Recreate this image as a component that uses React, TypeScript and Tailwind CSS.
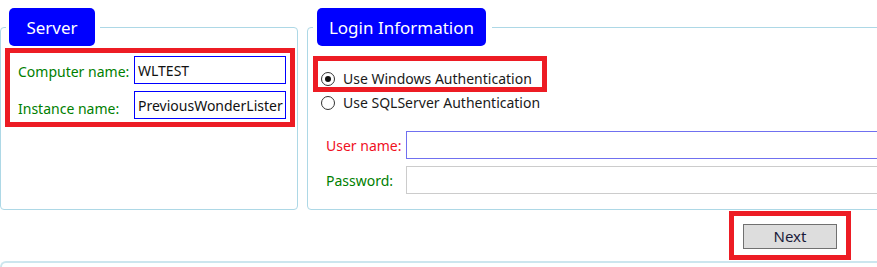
import React from 'react';

const FONT = "font-['Segoe_UI','Noto_Sans',sans-serif]";

function Tab({ label, width }: { label: string; width: string }) {
  return (
    <div className={`${width} h-[38px] flex items-center justify-center rounded-[5px] bg-[#0000ff] text-white text-[17px] leading-none`}>
      {label}
    </div>
  );
}

function Radio({ checked, label }: { checked?: boolean; label: string }) {
  return (
    <div className="flex items-center h-[14px] gap-[8px]">
      <div className="w-[14px] h-[14px] rounded-full border border-[#333] bg-white flex items-center justify-center">
        {checked && <div className="w-[6px] h-[6px] rounded-full bg-[#111]" />}
      </div>
      <span className="text-[14px] text-[#1a1a1a] leading-none">{label}</span>
    </div>
  );
}

export default function App() {
  return (
    <div className={`w-[877px] h-[267px] overflow-hidden bg-white ${FONT}`}>
      <div className="flex items-start">
        {/* Server group */}
        <fieldset className="shrink-0 min-w-0 mt-[8px] w-[298px] h-[202px] border border-[#add8e6] rounded-[4px]">
          <legend className="ml-[5px] pl-[3px] pr-[5px]">
            <Tab label="Server" width="w-[86px]" />
          </legend>
          <div className="ml-[4px] mt-[2px] w-[290px] border-[5px] border-[#ed1c24] pl-[8px] pr-[4px] pt-[3px] pb-[3px]">
            <div className="grid grid-cols-[116px_152px] gap-y-[7px] items-center">
              <span className="text-[14px] text-[#008000] pt-[3px]">Computer name:</span>
              <div className="h-[28px] border border-[#0000ff] px-[3px] flex items-center text-[14px] text-[#111]">WLTEST</div>
              <span className="text-[14px] text-[#008000] pt-[6px]">Instance name:</span>
              <div className="h-[28px] border border-[#0000ff] px-[3px] flex items-center text-[14px] text-[#111] whitespace-nowrap overflow-hidden">PreviousWonderLister</div>
            </div>
          </div>
        </fieldset>

        {/* Login group */}
        <fieldset className="shrink-0 min-w-0 ml-[9px] mt-[8px] w-[620px] h-[202px] border border-[#add8e6] rounded-[4px]">
          <legend className="ml-[5px] pl-[4px] pr-[6px]">
            <Tab label="Login Information" width="w-[169px]" />
          </legend>
          <div className="ml-[5px] mt-[10px] w-[234px] h-[36px] border-[5px] border-[#ed1c24] pl-[3px] pt-[11px]">
            <Radio checked label="Use Windows Authentication" />
          </div>
          <div className="ml-[13px] mt-[4px]">
            <Radio label="Use SQLServer Authentication" />
          </div>
          <div className="ml-[18px] mt-[21px] grid grid-cols-[80px_520px] gap-y-[7px] items-center">
            <span className="text-[14px] text-[#f0101e]">User name:</span>
            <div className="h-[28px] border border-[#7070f0] bg-white" />
            <span className="text-[14px] text-[#008000]">Password:</span>
            <div className="h-[28px] border border-[#cccccc] bg-white" />
          </div>
        </fieldset>
      </div>

      {/* Actions */}
      <div className="flex justify-end pr-[26px] mt-[1px]">
        <div className="w-[122px] h-[49px] border-[5px] border-[#ed1c24] flex justify-center pt-[8px]">
          <button className="w-[94px] h-[25px] bg-[#dddddd] border border-[#707070] text-[15px] text-[#1a1a3a] leading-none">
            Next
          </button>
        </div>
      </div>

      {/* Next group (partially visible) */}
      <div className="mt-[1px] h-[20px] border-t-2 border-l-2 border-[#cce6ee] rounded-tl-[6px]" />
    </div>
  );
}
